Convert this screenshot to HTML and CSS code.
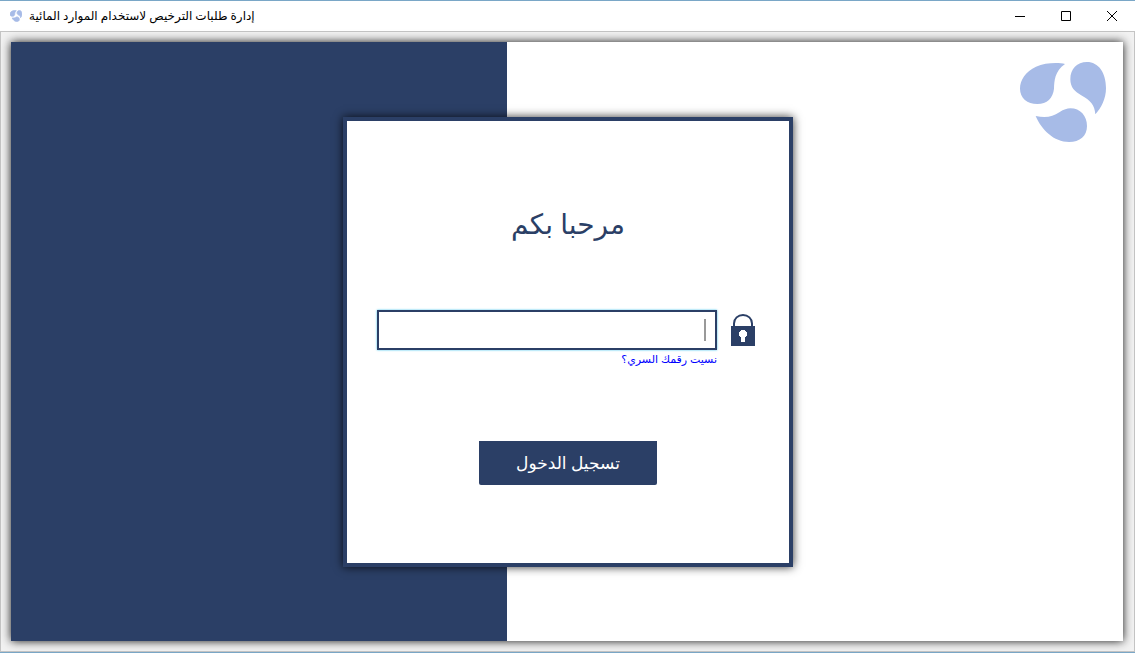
FILE: index.html
```html
<!DOCTYPE html>
<html lang="ar">
<head>
<meta charset="utf-8">
<title>إدارة طلبات الترخيص لاستخدام الموارد المائية</title>
<link rel="stylesheet" href="styles.css">
</head>
<body>
<svg class="defs" aria-hidden="true">
  <symbol id="drops" viewBox="60 186 258 240">
    <path d="M195 192C175 187 135 188 108 200C77 214 60 240 60 266C60 294 82 312 112 312C141 312 159 294 162 266C163 242 164 214 195 192Z"/>
    <path d="M286 343C304 324 318 296 318 264C318 218 295 186 261 186C231 186 211 207 211 238C211 262 224 275 246 287C271 301 284 314 286 343Z"/>
    <path d="M107 348C138 355 158 350 178 337C192 328 201 325 211 325C241 325 261 348 261 378C261 408 240 426 207 426C162 426 124 389 107 348Z"/>
  </symbol>
</svg>
<div class="window">
  <header class="titlebar">
    <svg class="titlebar-icon" aria-hidden="true"><use href="#drops"/></svg>
    <h1 class="titlebar-text" dir="rtl">إدارة طلبات الترخيص لاستخدام الموارد المائية</h1>
    <div class="window-controls">
      <button class="control" type="button" aria-label="تصغير"><svg class="control-icon" viewBox="0 0 12 12"><path d="M1 6.500H11"/></svg></button>
      <button class="control" type="button" aria-label="تكبير"><svg class="control-icon" viewBox="0 0 12 12"><path d="M1.500 1.500H10.500V10.500H1.500Z"/></svg></button>
      <button class="control" type="button" aria-label="إغلاق"><svg class="control-icon" viewBox="0 0 12 12"><path d="M1 1L11 11M11 1L1 11"/></svg></button>
    </div>
  </header>
  <div class="frame">
    <main class="stage">
      <div class="side"></div>
      <div class="main-side"><svg class="logo" role="img" aria-label="شعار"><use href="#drops"/></svg></div>
      <form class="card">
        <h2 class="welcome" dir="rtl">مرحبا بكم</h2>
        <div class="field-row">
          <div class="field">
            <input class="password" id="password" type="password" dir="rtl">
            <span class="caret"></span>
          </div>
          <label class="lock" for="password" aria-label="الرقم السري">
            <svg class="lock-icon" viewBox="0 0 24 32" aria-hidden="true">
              <path class="shackle" d="M3 13V9.500C3 4.500 7 1 12 1C17 1 21 4.500 21 9.500V13"/>
              <path class="lock-body" fill-rule="evenodd" d="M0 12H24V32H0ZM12 16A4 4 0 0 0 10 23.500V28H14V23.500A4 4 0 0 0 12 16Z"/>
            </svg>
          </label>
        </div>
        <a class="forgot" href="#" dir="rtl">نسيت رقمك السري؟</a>
        <button class="submit" type="button" dir="rtl">تسجيل الدخول</button>
      </form>
    </main>
  </div>
</div>
</body>
</html>
```
FILE: styles.css
```css
* { box-sizing: border-box; }
body {
  margin: 0;
  font-family: "Noto Sans", "Open Sans", "DejaVu Sans", sans-serif;
  background: #fff;
}
.defs { position: absolute; width: 0; height: 0; }
.window {
  display: flex;
  flex-direction: column;
  min-height: 100vh;
  border-top: 1px solid #7aa7c7;
  border-bottom: 1px solid #7aa7c7;
}
.titlebar {
  display: flex;
  align-items: center;
  height: 30px;
  padding-left: 10px;
  background: #fff;
}
.titlebar-icon { width: 12px; height: 12px; margin-right: 7px; fill: #a7bbe7; stroke: #a7bbe7; stroke-width: 16; }
.titlebar-text { margin: 0; font-size: 12px; font-weight: 400; line-height: 20px; color: #000; white-space: nowrap; }
.window-controls { display: flex; margin-left: auto; height: 100%; }
.control {
  display: flex;
  align-items: center;
  justify-content: center;
  width: 46px;
  height: 100%;
  padding: 0;
  border: 0;
  background: none;
}
.control-icon { width: 12px; height: 12px; fill: none; stroke: #000; stroke-width: 1; }
.frame {
  display: flex;
  flex: 1;
  padding: 10px 11px 10px 10px;
  border: 1px solid #c4c4c4;
  background: #f2f2f2;
}
.stage {
  display: grid;
  grid-template-columns: 496fr 616fr;
  flex: 1;
  background: #fff;
  box-shadow: 0 0 9px rgba(0, 0, 0, 0.9);
}
.side { grid-area: 1 / 1; background: #2b3f66; }
.main-side { grid-area: 1 / 2; padding: 20px 17px; text-align: right; }
.logo { width: 86px; height: 80px; fill: #a7bbe7; }
.card {
  grid-area: 1 / 1 / 2 / 3;
  place-self: center;
  display: flex;
  flex-direction: column;
  width: 450px;
  margin: 20px 0 20px 2px;
  padding: 78px 30px;
  border: 4px solid #2b3f66;
  background: #fff;
  box-shadow: 0 0 9px rgba(0, 0, 0, 0.8);
}
.welcome { margin: 0 0 63px; font-size: 28px; font-weight: 400; line-height: 48px; text-align: center; color: #2b3f66; }
.field-row { display: flex; align-items: center; gap: 14px; margin-right: 4px; }
.field { position: relative; flex: 1; }
.password {
  display: block;
  width: 100%;
  height: 40px;
  padding: 0 10px;
  border: 2px solid #2b3f66;
  outline: 0;
  background: #fff;
  font-size: 20px;
  box-shadow: 0 0 2px #3cc0ec;
}
.caret { position: absolute; top: 9px; right: 11px; width: 2px; height: 22px; background: #999; }
.lock { display: block; height: 32px; }
.lock-icon { display: block; width: 24px; height: 32px; }
.shackle { fill: none; stroke: #2b3f66; stroke-width: 2; }
.lock-body { fill: #2b3f66; shape-rendering: crispEdges; }
.forgot { align-self: flex-end; margin: 0 42px 73px 0; font-size: 11px; line-height: 18px; color: #00f; text-decoration: none; }
.submit {
  align-self: center;
  width: 178px;
  height: 44px;
  padding: 0;
  border: 0;
  border-radius: 0 0 2px 2px;
  background: #2b3f66;
  color: #fff;
  font-family: inherit;
  font-size: 17px;
}
```
